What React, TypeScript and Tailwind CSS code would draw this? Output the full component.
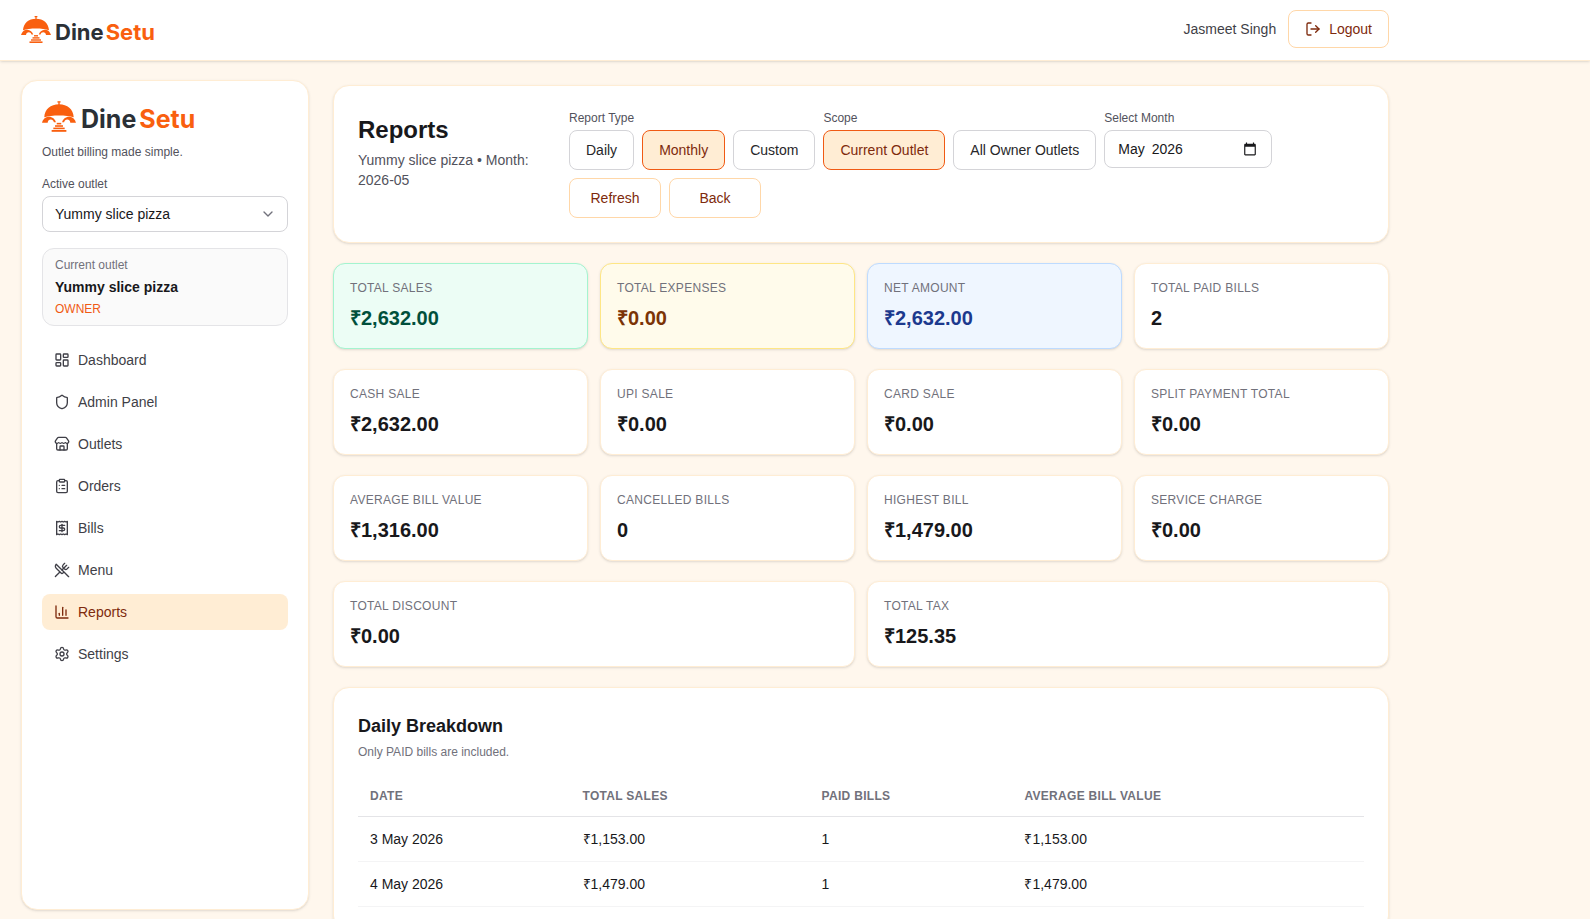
import React from 'react';
import {
  ChartColumn,
  ChevronDown,
  ClipboardList,
  LayoutDashboard,
  LogOut,
  Receipt,
  Settings,
  Shield,
  Store,
  UtensilsCrossed,
  type LucideIcon,
} from 'lucide-react';

interface LogoProps {
  large?: boolean;
}

const Logo: React.FC<LogoProps> = ({ large = false }) => {
  return (
    <div className={`flex items-end ${large ? 'gap-[5px]' : 'gap-1'}`}>
      <svg viewBox="0 0 60 54" className={large ? 'h-[31px] w-[34px]' : 'h-[27px] w-[30px]'} aria-hidden="true">
        <g fill="#f95f0f">
          {/* Cloche */}
          <rect x="27" y="0" width="6" height="2.4" rx="1" />
          <rect x="28.8" y="1" width="2.4" height="6" />
          <path d="M4 28.5C5 14 15 5.5 30 5.5s25 8.5 26 23c-7-2.4-16-3.3-26-3.3s-19 .9-26 3.3z" />
          {/* Bridge arches */}
          <path d="M0 38c1.5-5 5-10 11-10.500 7-.5 12 4 13.500 9.500h-3.500c-1-3-2.500-4.500-5.500-4.500s-5 2-5.500 5.500z" />
          <path d="M60 38c-1.5-5-5-10-11-10.500-7-.5-12 4-13.500 9.500h3.500c1-3 2.500-4.500 5.500-4.500s5 2 5.500 5.500z" />
          {/* Steps */}
          <rect x="26" y="38.2" width="8" height="2.800" />
          <rect x="23" y="42.4" width="14" height="2.800" />
          <rect x="20" y="46.600" width="20" height="2.800" />
          <rect x="17" y="50.800" width="26" height="3.200" />
        </g>
      </svg>
      <span className={`font-['Inter',sans-serif] leading-none font-bold ${large ? 'text-[25px]' : 'text-[22px]'}`}>
        <span className="text-[#2b3036]">Dine</span>
        <span className={`text-[#f95f0f] ${large ? 'ml-[3px]' : 'ml-0.5'}`}>Setu</span>
      </span>
    </div>
  );
};

interface IconProps {
  className?: string;
}

const CalendarIcon: React.FC<IconProps> = ({ className = '' }) => {
  return (
    <svg viewBox="0 0 24 24" fill="currentColor" className={className} aria-hidden="true">
      <path d="M20 3h-1V1h-2v2H7V1H5v2H4c-1.1 0-2 .9-2 2v16c0 1.1.9 2 2 2h16c1.1 0 2-.9 2-2V5c0-1.1-.9-2-2-2zm0 18H4V8h16v13z" />
    </svg>
  );
};

interface NavItem {
  label: string;
  icon: LucideIcon;
  active?: boolean;
}

const navItems: NavItem[] = [
  { label: 'Dashboard', icon: LayoutDashboard },
  { label: 'Admin Panel', icon: Shield },
  { label: 'Outlets', icon: Store },
  { label: 'Orders', icon: ClipboardList },
  { label: 'Bills', icon: Receipt },
  { label: 'Menu', icon: UtensilsCrossed },
  { label: 'Reports', icon: ChartColumn, active: true },
  { label: 'Settings', icon: Settings },
];

const Sidebar: React.FC = () => {
  return (
    <aside className="mt-[19px] h-[calc(100vh-89px)] w-72 shrink-0 rounded-2xl border border-orange-100 bg-white p-5 shadow-sm">
      <Logo large />
      <p className="mt-3 text-xs text-zinc-600">Outlet billing made simple.</p>

      <label htmlFor="outlet" className="mt-4 block text-xs text-zinc-600">
        Active outlet
      </label>
      <div className="relative mt-1">
        <select
          id="outlet"
          className="h-9 w-full appearance-none rounded-lg border border-zinc-300 bg-white px-3 text-sm text-zinc-900"
        >
          <option>Yummy slice pizza</option>
        </select>
        <ChevronDown className="pointer-events-none absolute top-2.5 right-3 size-4 text-zinc-500" />
      </div>

      <div className="mt-4 rounded-xl border border-zinc-200 bg-zinc-50 px-3 py-2">
        <p className="text-xs text-zinc-500">Current outlet</p>
        <p className="mt-1 text-sm font-semibold text-zinc-900">Yummy slice pizza</p>
        <p className="mt-1 text-xs text-[#f05a14]">OWNER</p>
      </div>

      <nav className="mt-4 flex flex-col gap-1.5">
        {navItems.map(({ label, icon: Icon, active }) => (
          <a
            key={label}
            href="#"
            className={`flex h-9 items-center gap-2 rounded-lg px-3 text-sm ${
              active ? 'bg-orange-100 text-orange-900' : 'text-zinc-700'
            }`}
          >
            <Icon className="size-4" />
            {label}
          </a>
        ))}
      </nav>
    </aside>
  );
};

interface ToggleProps {
  label: string;
  active?: boolean;
}

const Toggle: React.FC<ToggleProps> = ({ label, active = false }) => {
  return (
    <button
      type="button"
      aria-pressed={active}
      className={`h-10 rounded-lg border px-4 text-sm ${
        active ? 'border-[#f05a14] bg-orange-100 text-orange-900' : 'border-zinc-300 bg-white text-zinc-800'
      }`}
    >
      {label}
    </button>
  );
};

const ReportFilters: React.FC = () => {
  return (
    <section className="flex items-start gap-4 rounded-2xl border border-orange-100 bg-white p-6 shadow-sm">
      <div className="w-[195px] shrink-0 pt-1">
        <h1 className="text-2xl font-semibold text-zinc-900">Reports</h1>
        <p className="mt-1 text-sm text-zinc-600">Yummy slice pizza • Month: 2026-05</p>
      </div>
      <div className="flex flex-1 flex-wrap items-start gap-2">
        <div role="group" aria-labelledby="report-type">
          <p id="report-type" className="text-xs text-zinc-600">
            Report Type
          </p>
          <div className="mt-1 flex gap-2">
            <Toggle label="Daily" />
            <Toggle label="Monthly" active />
            <Toggle label="Custom" />
          </div>
        </div>
        <div role="group" aria-labelledby="scope">
          <p id="scope" className="text-xs text-zinc-600">
            Scope
          </p>
          <div className="mt-1 flex gap-2">
            <Toggle label="Current Outlet" active />
            <Toggle label="All Owner Outlets" />
          </div>
        </div>
        <div>
          <label htmlFor="month" className="block text-xs text-zinc-600">
            Select Month
          </label>
          <div className="relative mt-1">
            <input
              id="month"
              type="text"
              defaultValue={'May\u20022026'}
              className="block h-[38px] w-[168px] rounded-lg border border-zinc-300 bg-white px-[13px] text-sm text-zinc-900"
            />
            <CalendarIcon className="pointer-events-none absolute top-3 right-[15px] size-[14px] text-zinc-900" />
          </div>
        </div>
        <div className="flex gap-2">
          <button type="button" className="h-10 w-[92px] rounded-lg border border-orange-200 bg-white text-sm text-orange-900">
            Refresh
          </button>
          <button type="button" className="h-10 w-[92px] rounded-lg border border-orange-200 bg-white text-sm text-orange-900">
            Back
          </button>
        </div>
      </div>
    </section>
  );
};

interface Stat {
  label: string;
  value: string;
  card?: string;
  text?: string;
}

const stats: Stat[] = [
  { label: 'Total Sales', value: '₹2,632.00', card: 'border-emerald-200 bg-emerald-50', text: 'text-emerald-900' },
  { label: 'Total Expenses', value: '₹0.00', card: 'border-amber-200 bg-amber-50', text: 'text-amber-900' },
  { label: 'Net Amount', value: '₹2,632.00', card: 'border-blue-200 bg-blue-50', text: 'text-blue-900' },
  { label: 'Total Paid Bills', value: '2' },
  { label: 'Cash Sale', value: '₹2,632.00' },
  { label: 'UPI Sale', value: '₹0.00' },
  { label: 'Card Sale', value: '₹0.00' },
  { label: 'Split Payment Total', value: '₹0.00' },
  { label: 'Average Bill Value', value: '₹1,316.00' },
  { label: 'Cancelled Bills', value: '0' },
  { label: 'Highest Bill', value: '₹1,479.00' },
  { label: 'Service Charge', value: '₹0.00' },
];

const totals: Stat[] = [
  { label: 'Total Discount', value: '₹0.00' },
  { label: 'Total Tax', value: '₹125.35' },
];

const StatCard: React.FC<Stat> = ({
  label,
  value,
  card = 'border-orange-100 bg-white',
  text = 'text-zinc-900',
}) => {
  return (
    <div className={`rounded-xl border p-4 shadow-sm ${card}`}>
      <p className="text-xs tracking-wide text-zinc-500 uppercase">{label}</p>
      <p className={`mt-2 text-xl font-semibold ${text}`}>{value}</p>
    </div>
  );
};

const days = [
  { date: '3 May 2026', sales: '₹1,153.00', bills: 1, average: '₹1,153.00' },
  { date: '4 May 2026', sales: '₹1,479.00', bills: 1, average: '₹1,479.00' },
];

const DailyBreakdown: React.FC = () => {
  return (
    <section className="rounded-2xl border border-orange-100 bg-white p-6 shadow-sm">
      <h2 className="text-lg font-semibold text-zinc-900">Daily Breakdown</h2>
      <p className="mt-1 text-xs text-zinc-500">Only PAID bills are included.</p>
      <table className="mt-4 w-full text-left text-sm">
        <thead>
          <tr className="border-b border-zinc-200 text-xs tracking-wide text-zinc-500 uppercase">
            <th className="p-3 font-semibold">Date</th>
            <th className="p-3 font-semibold">Total Sales</th>
            <th className="p-3 font-semibold">Paid Bills</th>
            <th className="p-3 font-semibold">Average Bill Value</th>
          </tr>
        </thead>
        <tbody>
          {days.map((day) => (
            <tr key={day.date} className="border-b border-zinc-100 text-zinc-900">
              <td className="p-3">{day.date}</td>
              <td className="p-3">{day.sales}</td>
              <td className="p-3">{day.bills}</td>
              <td className="p-3">{day.average}</td>
            </tr>
          ))}
        </tbody>
      </table>
    </section>
  );
};

const App: React.FC = () => {
  return (
    <div className="h-screen overflow-hidden bg-orange-50 font-['Liberation_Sans',Arial,sans-serif] text-zinc-900">
      <header className="border-b border-orange-100 bg-white shadow-sm">
        <div className="flex max-w-[1410px] items-center justify-between px-[21px] pt-2.5 pb-3">
          <Logo />
          <div className="flex items-center gap-3">
            <span className="text-sm text-zinc-700">Jasmeet Singh</span>
            <button
              type="button"
              className="flex h-[38px] items-center gap-2 rounded-lg border border-orange-200 bg-white px-4 text-sm text-orange-900"
            >
              <LogOut className="size-4" />
              Logout
            </button>
          </div>
        </div>
      </header>

      <div className="flex max-w-[1410px] items-start gap-6 px-[21px]">
        <Sidebar />
        <main className="mt-6 flex min-w-0 flex-1 flex-col gap-5">
          <ReportFilters />
          <div className="grid grid-cols-4 gap-x-3 gap-y-5">
            {stats.map((stat) => (
              <StatCard key={stat.label} {...stat} />
            ))}
          </div>
          <div className="grid grid-cols-2 gap-3">
            {totals.map((stat) => (
              <StatCard key={stat.label} {...stat} />
            ))}
          </div>
          <DailyBreakdown />
        </main>
      </div>
    </div>
  );
};

export default App;
